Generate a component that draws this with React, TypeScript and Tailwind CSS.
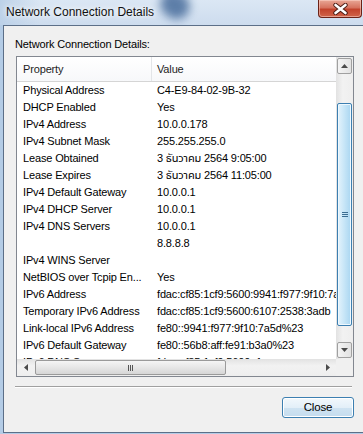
const font = "font-['Liberation_Sans','Noto_Sans_Thai','Noto_Sans',sans-serif]";

const rows: [string, string][] = [
  ['Physical Address', 'C4-E9-84-02-9B-32'],
  ['DHCP Enabled', 'Yes'],
  ['IPv4 Address', '10.0.0.178'],
  ['IPv4 Subnet Mask', '255.255.255.0'],
  ['Lease Obtained', '3 ธันวาคม 2564 9:05:00'],
  ['Lease Expires', '3 ธันวาคม 2564 11:05:00'],
  ['IPv4 Default Gateway', '10.0.0.1'],
  ['IPv4 DHCP Server', '10.0.0.1'],
  ['IPv4 DNS Servers', '10.0.0.1'],
  ['', '8.8.8.8'],
  ['IPv4 WINS Server', ''],
  ['NetBIOS over Tcpip En...', 'Yes'],
  ['IPv6 Address', 'fdac:cf85:1cf9:5600:9941:f977:9f10:7a5d'],
  ['Temporary IPv6 Address', 'fdac:cf85:1cf9:5600:6107:2538:3adb'],
  ['Link-local IPv6 Address', 'fe80::9941:f977:9f10:7a5d%23'],
  ['IPv6 Default Gateway', 'fe80::56b8:aff:fe91:b3a0%23'],
  ['IPv6 DNS Servers', 'fdac:cf85:1cf9:5600::1'],
];

type Dir = 'up' | 'down' | 'left' | 'right';

function Arrow({ dir }: { dir: Dir }) {
  const vertical = dir === 'up' || dir === 'down';
  const points = {
    up: '0,4 3.5,0 7,4',
    down: '0,0 3.5,4 7,0',
    left: '4,0 0,3.5 4,7',
    right: '0,0 4,3.5 0,7',
  }[dir];
  return (
    <svg width={vertical ? 7 : 4} height={vertical ? 4 : 7} viewBox={vertical ? '0 0 7 4' : '0 0 4 7'}>
      <polygon points={points} fill="#4a4a4a" />
    </svg>
  );
}

function ScrollButton({ dir }: { dir: Dir }) {
  return (
    <div className="mx-auto flex h-[16px] w-[15px] items-center justify-center rounded-[2px] border border-[#a0a0a0] bg-[linear-gradient(to_right,#f4f4f4,#e2e2e2)]">
      <Arrow dir={dir} />
    </div>
  );
}

function VScrollbar() {
  return (
    <div className="flex flex-col bg-[linear-gradient(to_right,#e2e2e2,#f2f2f2_40%,#eeeeee)]">
      <div className="mt-[1px]">
        <ScrollButton dir="up" />
      </div>
      <div className="mx-auto mt-[29px] flex h-[223px] w-[15px] items-center justify-center rounded-[2px] border border-[#3c7fb1] bg-[linear-gradient(to_right,#e3f3fc,#c6e5f7_50%,#a9d6f1)] shadow-[inset_0_0_0_1px_#eef8fe]">
        <div className="flex flex-col gap-[1px]">
          <div className="h-[1px] w-[6px] bg-[#3b6d91]" />
          <div className="h-[1px] w-[6px] bg-[#3b6d91]" />
          <div className="h-[1px] w-[6px] bg-[#3b6d91]" />
        </div>
      </div>
      <div className="mt-[16px]">
        <ScrollButton dir="down" />
      </div>
    </div>
  );
}

function HScrollbar() {
  return (
    <div className="flex items-center bg-[linear-gradient(to_bottom,#e2e2e2,#f2f2f2_40%,#eeeeee)]">
      <div className="flex w-[17px] justify-center">
        <Arrow dir="left" />
      </div>
      <div className="ml-[1px] flex h-[15px] w-[191px] items-center justify-center gap-[1px] rounded-[2px] border border-[#9a9a9a] bg-[linear-gradient(to_bottom,#f5f5f5,#e6e6e6_50%,#d6d6d6)]">
        <div className="h-[6px] w-[1px] bg-[#555]" />
        <div className="h-[6px] w-[1px] bg-[#555]" />
        <div className="h-[6px] w-[1px] bg-[#555]" />
      </div>
      <div className="ml-auto flex w-[17px] justify-center">
        <Arrow dir="right" />
      </div>
    </div>
  );
}

function DetailsList() {
  return (
    <div className="ml-[12px] mt-[4px] grid h-[321px] w-[338px] grid-cols-[1fr_17px] grid-rows-[1fr_17px] border border-[#828790] bg-white">
      <div className="overflow-hidden">
        <div className="flex h-[25px] items-center border-b border-[#d5d5d5] bg-[linear-gradient(to_bottom,#ffffff,#f7f8fa)] text-[#1e1e1e]">
          <div className="flex h-full w-[135px] items-center border-r border-[#e3e5e8] pl-[6px]">Property</div>
          <div className="pl-[5px]">Value</div>
        </div>
        {rows.map(([name, value], i) => (
          <div key={i} className="flex h-[17px] items-center whitespace-nowrap text-black">
            <div className="w-[134px] shrink-0 pl-[6px]">{name}</div>
            <div className="pl-[6px]">{value}</div>
          </div>
        ))}
      </div>
      <VScrollbar />
      <HScrollbar />
      <div className="bg-[#f0f0f0]" />
    </div>
  );
}

export default function App() {
  return (
    <div className={`flex h-[434px] w-[363px] flex-col overflow-hidden bg-[#b4cce6] ${font}`}>
      <div className="relative flex h-[25px] shrink-0 overflow-hidden bg-[linear-gradient(to_bottom,#dbe7f4,#cddcee)]">
        <div className="absolute left-[160px] top-[-8px] h-[26px] w-[30px] rotate-[35deg] rounded-full bg-[#3f6596] opacity-80 blur-[5px]" />
        <div className="absolute left-[0px] top-0 h-full w-[40px] bg-[linear-gradient(to_right,#bcd1e8,transparent)]" />
        <span className="relative pl-[6px] pt-[5px] text-[12px] leading-[15px] text-[#111] [text-shadow:0_0_5px_#ffffff,0_0_8px_#ffffff]">
          Network Connection Details
        </span>
        <div className="relative ml-auto mr-[1px] flex h-[18px] w-[44px] items-center justify-center rounded-b-[4px] border border-t-0 border-[#6b2217] bg-[linear-gradient(to_bottom,#e9a796,#d6735f_45%,#c2432c_55%,#d0644a)] shadow-[inset_0_0_0_1px_rgba(255,220,210,0.5)]">
          <svg width="15" height="12" viewBox="0 0 15 12">
            <path d="M2.5 2 L12.5 10 M12.5 2 L2.5 10" stroke="#4a1a12" strokeWidth="4.4" strokeLinecap="round" />
            <path d="M2.5 2 L12.5 10 M12.5 2 L2.5 10" stroke="#ffffff" strokeWidth="2.6" strokeLinecap="round" />
          </svg>
        </div>
      </div>
      <div className="ml-[3px] flex h-[408px] flex-col border-y border-l border-[#5c6f88] bg-[#f0f0f0] text-[11px] leading-[15px] tracking-[-0.15px]">
        <div className="pl-[11px] pt-[11px] text-black">Network Connection Details:</div>
        <DetailsList />
        <div className="ml-[11px] mt-[9px] h-[2px] w-[337px] border-y border-b-white border-t-[#a0a0a0]" />
        <button className="ml-[278px] mt-[9px] flex h-[21px] w-[72px] items-center justify-center rounded-[3px] border border-[#3c7fb1] bg-[linear-gradient(to_bottom,#f2f8fc,#e3eff8_50%,#cfe3f2_51%,#c4dcee)] text-[11.5px] text-black shadow-[inset_0_0_0_1px_#ffffff]">
          Close
        </button>
      </div>
    </div>
  );
}
